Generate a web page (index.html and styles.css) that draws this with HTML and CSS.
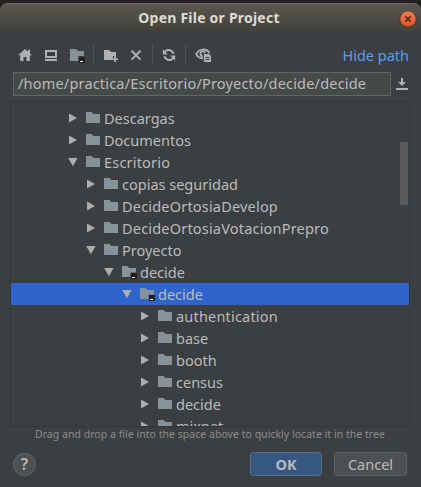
FILE: index.html
```html
<!DOCTYPE html>
<html lang="es">
<head>
<meta charset="utf-8">
<title>Open File or Project</title>
<link rel="stylesheet" href="styles.css">
</head>
<body>
<svg class="defs" width="0" height="0">
  <symbol id="folder" viewBox="0 0 16 16"><path fill="#87939a" d="M1 2h5.500l2 2H15v9H1z"/></symbol>
  <symbol id="module" viewBox="0 0 16 16"><path fill="#87939a" d="M1 2h5.500l2 2H15v4.500H9.300V13H1z"/><path fill="#231f20" d="M10 9h6v6h-6z"/><path fill="#fff" d="M11 13h3v1h-3z"/></symbol>
  <symbol id="closed" viewBox="0 0 10 10"><path fill="#adadad" d="M1 .5 9 5 1 9.500z"/></symbol>
  <symbol id="open" viewBox="0 0 10 10"><path fill="#adadad" d="M.2 1h9.400L4.900 9.300z"/></symbol>
</svg>
<div class="window">
  <header class="titlebar">
    <h1>Open File or Project</h1>
    <svg class="close" width="18" height="18" viewBox="0 0 18 18"><defs><linearGradient id="g" x2="0" y2="1"><stop stop-color="#f47b53"/><stop offset="1" stop-color="#e2501f"/></linearGradient></defs><circle cx="9" cy="9" r="8.200" fill="url(#g)" stroke="#35342f" stroke-width=".8"/><path d="m6.200 6.200 5.600 5.600m0-5.600-5.600 5.600" stroke="#45291c" stroke-width="1.500"/></svg>
  </header>
  <nav class="toolbar">
    <svg class="home" width="16" height="16" viewBox="0 0 16 16"><path fill="#afb1b3" d="M8 2 15 8.200h-2.200V14H9.500v-4h-3v4H3.200V8.200H1zM11 2.800h2v4l-2-2z"/></svg>
    <svg class="desktop" width="16" height="16" viewBox="0 0 16 16"><path fill="#afb1b3" fill-rule="evenodd" d="M2 3h12v8H2zm2 2v4h8V5zM2 12h12v2H2z"/></svg>
    <svg class="project" width="18" height="18" viewBox="0 0 18 18"><path fill="#87939a" d="M1 2h6l2 2h6v5h-5.700v5H1z"/><path fill="#231f20" d="M10 10h6v6h-6z"/><path fill="#fff" d="M11 14h3v1h-3z"/></svg>
    <i class="sep"></i>
    <svg class="new" width="16" height="16" viewBox="0 0 16 16"><path fill="#afb1b3" d="M1 3h5l2 2h5v4h-3v2H9v2H1zM11.200 9h1.800v2.200h2V13h-2v2h-1.800v-2H9v-1.800h2.200z"/></svg>
    <svg class="delete" width="16" height="16" viewBox="0 0 16 16"><path d="m3.600 3.800 8.800 8.800m0-8.800-8.800 8.800" stroke="#afb1b3" stroke-width="2"/></svg>
    <i class="sep"></i>
    <svg class="refresh" width="16" height="16" viewBox="0 0 16 16"><g fill="none" stroke="#afb1b3" stroke-width="2"><path d="M3.200 6C4.600 2.300 10 1.500 12.700 6.800M12.800 10c-1.400 3.700-6.800 4.500-9.500-.8"/></g><path fill="#afb1b3" d="M1.800 2.500v5h5zM14.200 13.500v-5h-5z"/></svg>
    <i class="sep"></i>
    <svg class="hidden" width="18" height="18" viewBox="0 0 18 18"><path d="M8.200 12.500C4.800 12.300 2.300 10.200 1.200 8 4.200 2.200 11.800 2.200 14.500 7" fill="none" stroke="#afb1b3" stroke-width="1.800"/><path d="M8 10.400A2.500 2.500 0 1 1 10.300 7" fill="none" stroke="#afb1b3" stroke-width="1.800"/><path fill="#afb1b3" fill-rule="evenodd" d="M9 8h5l2 2v6H9zm1.500 3v1h4v-1zm0 2v1h4v-1z"/></svg>
    <a class="link">Hide path</a>
  </nav>
  <div class="pathrow">
    <div class="field"><span>/home/practica/Escritorio/Proyecto/decide/decide</span></div>
    <svg width="14" height="14" viewBox="0 0 14 14"><path fill="#afb1b3" d="M6 1h2v4h3L7 9 3 5h3zM1 11h12v2H1z"/></svg>
  </div>
  <main class="tree">
    <div class="row l0"><svg class="arrow"><use href="#closed"/></svg><svg class="icon"><use href="#folder"/></svg><span>Descargas</span></div>
    <div class="row l0"><svg class="arrow"><use href="#closed"/></svg><svg class="icon"><use href="#folder"/></svg><span>Documentos</span></div>
    <div class="row l0"><svg class="arrow"><use href="#open"/></svg><svg class="icon"><use href="#folder"/></svg><span class="wide">Escritorio</span></div>
    <div class="row l1"><svg class="arrow"><use href="#closed"/></svg><svg class="icon"><use href="#folder"/></svg><span>copias seguridad</span></div>
    <div class="row l1"><svg class="arrow"><use href="#closed"/></svg><svg class="icon"><use href="#folder"/></svg><span class="wide">DecideOrtosiaDevelop</span></div>
    <div class="row l1"><svg class="arrow"><use href="#closed"/></svg><svg class="icon"><use href="#folder"/></svg><span class="wide">DecideOrtosiaVotacionPrepro</span></div>
    <div class="row l1"><svg class="arrow"><use href="#open"/></svg><svg class="icon"><use href="#folder"/></svg><span>Proyecto</span></div>
    <div class="row l2"><svg class="arrow"><use href="#open"/></svg><svg class="icon"><use href="#module"/></svg><span>decide</span></div>
    <div class="row l3 selected"><svg class="arrow"><use href="#open"/></svg><svg class="icon"><use href="#module"/></svg><span>decide</span></div>
    <div class="row l4"><svg class="arrow"><use href="#closed"/></svg><svg class="icon"><use href="#folder"/></svg><span class="wide">authentication</span></div>
    <div class="row l4"><svg class="arrow"><use href="#closed"/></svg><svg class="icon"><use href="#folder"/></svg><span>base</span></div>
    <div class="row l4"><svg class="arrow"><use href="#closed"/></svg><svg class="icon"><use href="#folder"/></svg><span>booth</span></div>
    <div class="row l4"><svg class="arrow"><use href="#closed"/></svg><svg class="icon"><use href="#folder"/></svg><span>census</span></div>
    <div class="row l4"><svg class="arrow"><use href="#closed"/></svg><svg class="icon"><use href="#folder"/></svg><span>decide</span></div>
    <div class="row l4"><svg class="arrow"><use href="#closed"/></svg><svg class="icon"><use href="#folder"/></svg><span>mixnet</span></div>
    <div class="thumb"></div>
  </main>
  <p class="hint">Drag and drop a file into the space above to quickly locate it in the tree</p>
  <footer class="actions">
    <button class="help">?</button>
    <button class="btn ok">OK</button>
    <button class="btn cancel">Cancel</button>
  </footer>
</div>
</body>
</html>
```

FILE: styles.css
```css
* { box-sizing: border-box; }
body {
  margin: 0;
  background: #222120;
  color: #bbb;
  font: 14.5px/22px "Noto Sans", "Open Sans", sans-serif;
  overflow: hidden;
}
.defs { position: absolute; }
svg { display: block; flex: none; }
.window {
  height: 484px;
  margin-top: 3px;
  background: #3c3f41;
  border-radius: 7px 7px 0 0;
  overflow: hidden;
}
.titlebar {
  display: flex;
  align-items: center;
  height: 30px;
  padding: 0 4px 0 19px;
  background: linear-gradient(#5a574f, #403f3a);
  border-top: 1px solid #69665e;
}
.titlebar h1 {
  flex: 1;
  margin: 0;
  padding-bottom: 2px;
  text-align: center;
  font-size: 14px;
  font-weight: 700;
  line-height: 26px;
  letter-spacing: .22px;
  color: #dfdbd2;
}
.toolbar {
  display: flex;
  align-items: center;
  height: 38px;
  margin-top: 3px;
  padding: 0 12px 0 17px;
}
.desktop { margin-left: 10px; }
.project { margin: 2px 0 0 10px; }
.sep { width: 1px; height: 20px; background: #515557; }
.project + .sep { margin-left: 6px; }
.new { margin-left: 9px; }
.delete { margin-left: 9px; }
.delete + .sep { margin-left: 8px; }
.refresh { margin-left: 8px; }
.refresh + .sep { margin-left: 8px; }
.hidden { margin-left: 9px; }
.link { margin-left: auto; color: #589df6; }
.pathrow { display: flex; align-items: center; padding-left: 13px; margin-top: -2px; }
.field {
  width: 378px;
  height: 24px;
  padding-left: 4px;
  border: 1px solid #646464;
  background: #45494a;
  line-height: 21px;
  letter-spacing: .19px;
  white-space: nowrap;
}
.pathrow svg { margin-left: 4px; }
.tree {
  position: relative;
  height: 326px;
  width: 400px;
  margin: 5px 0 0 10px;
  padding-top: 5px;
  border: 1px solid #323436;
  overflow: hidden;
}
.row { display: flex; align-items: center; height: 22px; white-space: nowrap; }
.wide { letter-spacing: .19px; }
.arrow { width: 10px; height: 10px; margin-right: 7px; }
.icon { width: 16px; height: 16px; margin-right: 3px; }
.l0 { padding-left: 57px; }
.l1 { padding-left: 75px; }
.l2 { padding-left: 93px; }
.l3 { padding-left: 111px; }
.l4 { padding-left: 129px; }
.selected { background: #2f65ca; }
.thumb {
  position: absolute;
  right: 1px;
  top: 40px;
  width: 8px;
  height: 63px;
  background: #595b5d;
}
.hint {
  margin: 0;
  line-height: 15px;
  font-size: 10.5px;
  letter-spacing: .03px;
  color: #8c8c8c;
  padding-left: 35px;
  white-space: nowrap;
}
.actions { display: flex; align-items: center; margin-top: 10px; padding-left: 13px; }
button { padding: 0; color: #bbb; font-family: inherit; }
.help {
  width: 23px;
  height: 23px;
  border: 1px solid #646768;
  border-radius: 50%;
  background: #4c5052;
  font-size: 16px;
  font-weight: 600;
  line-height: 20px;
}
.btn {
  height: 24px;
  border: 1px solid #5e6060;
  border-radius: 3px;
  background: #4c5052;
  font-size: 14.5px;
  line-height: 20px;
}
.ok {
  width: 72px;
  margin-left: 214px;
  border-color: #4c708c;
  background: #365880;
  font-weight: 700;
}
.cancel { width: 73px; margin-left: 12px; }
```
